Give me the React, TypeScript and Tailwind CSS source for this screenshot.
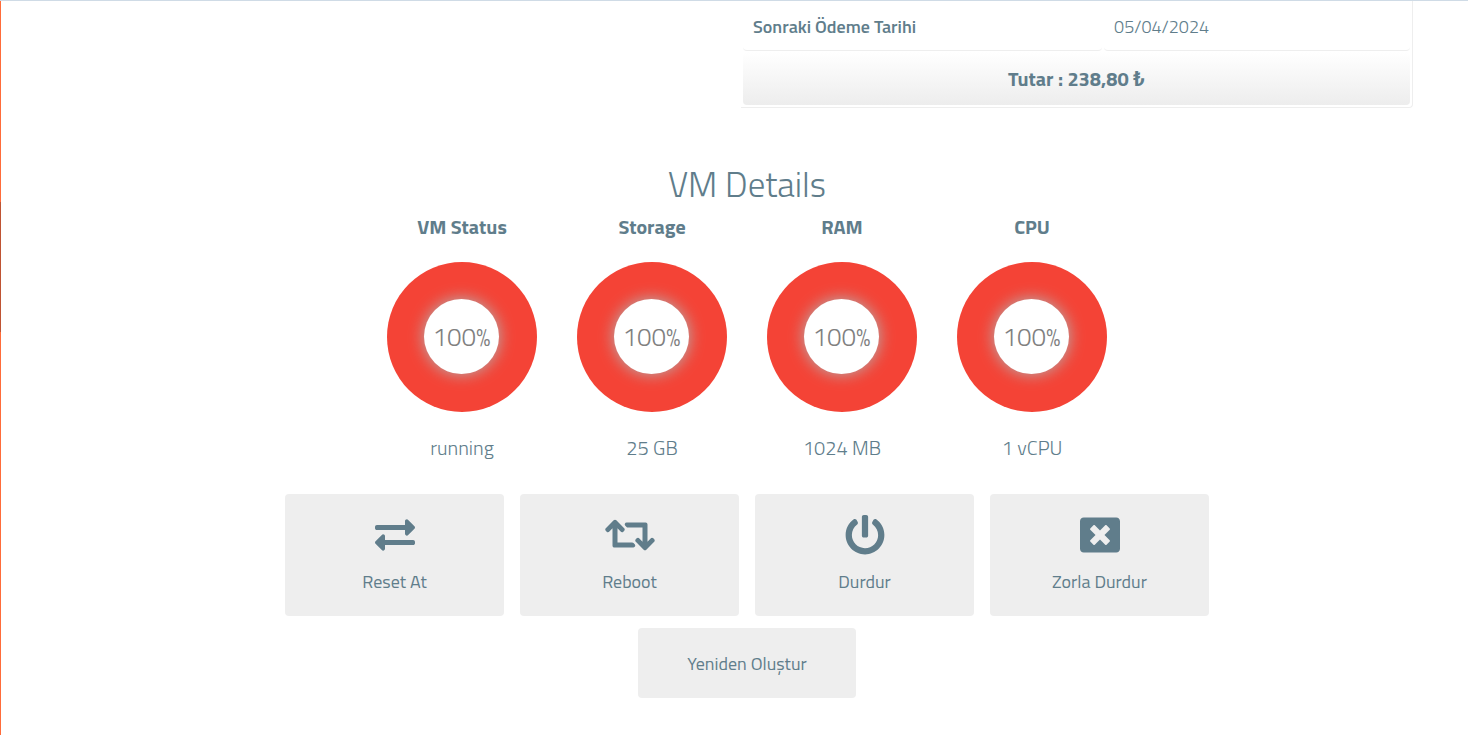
import type { IconType } from "react-icons";
import { FaExchangeAlt, FaPowerOff, FaRetweet, FaWindowClose } from "react-icons/fa";

const STATS = [
  { label: "VM Status", percent: 100, value: "running" },
  { label: "Storage", percent: 100, value: "25 GB" },
  { label: "RAM", percent: 100, value: "1024 MB" },
  { label: "CPU", percent: 100, value: "1 vCPU" },
];

const ACTIONS: { label: string; icon: IconType; iconClass: string }[] = [
  { label: "Reset At", icon: FaExchangeAlt, iconClass: "h-10 w-10" },
  { label: "Reboot", icon: FaRetweet, iconClass: "h-10 w-[50px]" },
  { label: "Durdur", icon: FaPowerOff, iconClass: "h-10 w-10" },
  { label: "Zorla Durdur", icon: FaWindowClose, iconClass: "h-10 w-10" },
];

export default function App() {
  return (
    <div className="flex min-h-screen flex-col border-t border-[#cfdbe6] bg-white font-['Titillium_Web',Roboto,sans-serif] text-[#607d8b]">
      <div className="flex flex-1">
        <SidebarEdge />
        <main className="min-w-0 flex-1 pr-[55px] pb-9 pl-20">
          <PaymentSummary />
          <VmDetails />
        </main>
      </div>
    </div>
  );
}

function SidebarEdge() {
  return (
    <aside className="flex w-px flex-col bg-[#ff6c3a]">
      <div className="mt-[201px] h-[130px] bg-[#bf5433]" />
    </aside>
  );
}

function PaymentSummary() {
  return (
    <div className="ml-auto w-[672px] max-w-full rounded-br border-r border-b border-[#eee] pb-px">
      <table className="w-full border-separate border-spacing-x-[2px] border-spacing-y-px">
        <tbody>
          <tr>
            <th scope="row" className="h-[49px] w-[54%] rounded border-b border-[#eee] px-[10px] text-left text-[18px] font-semibold">
              Sonraki Ödeme Tarihi
            </th>
            <td className="rounded border-b border-[#eee] px-[10px] text-[18px] font-light">05/04/2024</td>
          </tr>
          <tr>
            <td colSpan={2} className="h-[53px] rounded bg-linear-to-b from-white to-[#ededed] text-center text-[20px] font-bold">
              Tutar : 238,80 ₺
            </td>
          </tr>
        </tbody>
      </table>
    </div>
  );
}

function VmDetails() {
  return (
    <section className="mt-[55px] flex flex-col items-center">
      <h2 className="text-[35px] leading-[42px] font-light">VM Details</h2>

      <div className="mt-[10px] flex flex-wrap justify-center gap-10">
        {STATS.map((stat) => (
          <div key={stat.label} className="flex w-[150px] flex-col items-center">
            <h3 className="text-[20px] leading-6 font-bold">{stat.label}</h3>
            <Gauge percent={stat.percent} />
            <p className="mt-6 text-[20px] leading-6 font-light">{stat.value}</p>
          </div>
        ))}
      </div>

      <div className="mt-[34px] flex flex-wrap justify-center gap-x-4 gap-y-3">
        {ACTIONS.map(({ label, icon: Icon, iconClass }) => (
          <button
            key={label}
            type="button"
            className="flex h-[122px] w-[219px] cursor-pointer flex-col items-center rounded bg-[#eee] pt-[21px] text-[18px] font-medium"
          >
            <Icon className={iconClass} aria-hidden="true" />
            <span className="mt-[15px] leading-6">{label}</span>
          </button>
        ))}
      </div>
      <button
        type="button"
        className="mt-3 h-[70px] w-[218px] cursor-pointer rounded bg-[#eee] text-[18px] font-medium"
      >
        Yeniden Oluştur
      </button>
    </section>
  );
}

function Gauge({ percent }: { percent: number }) {
  return (
    <div className="mt-[23px] flex size-[150px] items-center justify-center rounded-full bg-[#f44336] pr-px pb-px">
      <div className="flex size-[75px] items-center justify-center rounded-full bg-white text-[26px] font-light text-[#808080] shadow-[0_0_16px_#b3b3b3]">
        {percent}%
      </div>
    </div>
  );
}
